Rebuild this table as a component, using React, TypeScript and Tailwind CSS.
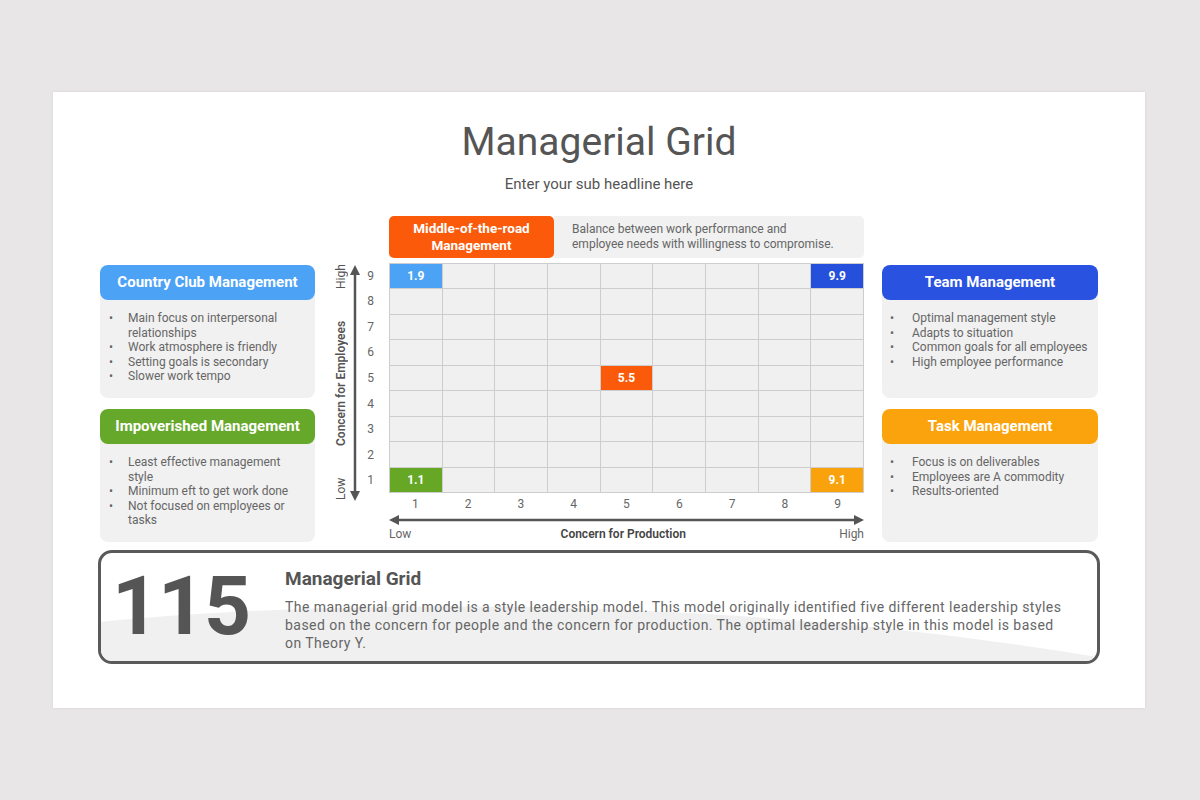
import React from 'react';

interface StyleCard {
  title: string;
  color: string;
  items: string[];
}

const leftCards: StyleCard[] = [
  {
    title: 'Country Club Management',
    color: 'bg-[#4ca2f5]',
    items: [
      'Main focus on interpersonal relationships',
      'Work atmosphere is friendly',
      'Setting goals is secondary',
      'Slower work tempo',
    ],
  },
  {
    title: 'Impoverished Management',
    color: 'bg-[#66a82a]',
    items: [
      'Least effective management style',
      'Minimum eft to get work done',
      'Not focused on employees or tasks',
    ],
  },
];

const rightCards: StyleCard[] = [
  {
    title: 'Team Management',
    color: 'bg-[#2952e0]',
    items: [
      'Optimal management style',
      'Adapts to situation',
      'Common goals for all employees',
      'High employee performance',
    ],
  },
  {
    title: 'Task Management',
    color: 'bg-[#fba30d]',
    items: ['Focus is on deliverables', 'Employees are A commodity', 'Results-oriented'],
  },
];

// row 1 = top (value 9), col 1 = left (value 1)
const marks: Record<string, { label: string; color: string }> = {
  '1-1': { label: '1.9', color: 'bg-[#4ca2f5]' },
  '1-9': { label: '9.9', color: 'bg-[#2450dc]' },
  '5-5': { label: '5.5', color: 'bg-[#fa5a0a]' },
  '9-1': { label: '1.1', color: 'bg-[#66a826]' },
  '9-9': { label: '9.1', color: 'bg-[#f9a20c]' },
};

const Card = ({ card, right }: { card: StyleCard; right?: boolean }) => (
  <div className="flex flex-col">
    <div
      className={`${card.color} relative z-10 h-[35px] rounded-[8px] flex items-center justify-center text-white text-[15px] font-bold`}
    >
      {card.title}
    </div>
    <div className="bg-[#f1f1f1] rounded-b-[8px] -mt-[6px] pt-[17px] pb-2 h-[104px]">
      <ul className={right ? 'pl-[8px] pr-1' : 'pl-[9px] pr-3'}>
        {card.items.map((item) => (
          <li key={item} className="flex text-[12px] leading-[14.5px] text-[#666]">
            <span className={right ? 'w-[22px] shrink-0' : 'w-[19px] shrink-0'}>•</span>
            <span>{item}</span>
          </li>
        ))}
      </ul>
    </div>
  </div>
);

const ManagerialGrid = () => {
  const rows = [1, 2, 3, 4, 5, 6, 7, 8, 9];
  return (
    <div className="w-[549px] flex flex-col">
      {/* Middle-of-the-road banner */}
      <div className="ml-[74px] w-[475px] h-[42px] flex">
        <div className="w-[165px] bg-[#fa5a0a] rounded-[5px] flex items-center justify-center text-center text-white text-[13.5px] font-bold leading-[17px]">
          Middle-of-the-road
          <br />
          Management
        </div>
        <div className="flex-1 bg-[#f1f1f1] rounded-r-[5px] flex items-center pl-[18px] text-[12px] leading-[15px] text-[#666]">
          Balance between work performance and
          <br />
          employee needs with willingness to compromise.
        </div>
      </div>

      {/* Y axis + grid */}
      <div className="mt-[5px] flex h-[230px]">
        <div className="w-[74px] flex justify-end pr-[9px]">
          <div className="h-[236px] mt-[1px] w-[14px] flex justify-between items-center [writing-mode:vertical-rl] rotate-180 text-[12px] text-[#555]">
            <span>Low</span>
            <span className="font-semibold">Concern for Employees</span>
            <span>High</span>
          </div>
          <svg className="ml-[1px] w-[12px] h-[236px] mt-[2px] shrink-0" viewBox="0 0 12 236">
            <line x1="6" y1="8" x2="6" y2="228" stroke="#555" strokeWidth="2.5" />
            <polygon points="6,0 11,10 1,10" fill="#555" />
            <polygon points="6,236 11,226 1,226" fill="#555" />
          </svg>
          <div className="w-[19px] grid grid-rows-9 text-[12px] text-[#666] text-center">
            {rows.map((r) => (
              <div key={r} className="flex items-center justify-center">
                {10 - r}
              </div>
            ))}
          </div>
        </div>
        <div className="w-[475px] h-[230px] grid grid-cols-9 grid-rows-9 bg-[#cdcdcd] gap-px border border-[#cdcdcd]">
          {rows.map((r) =>
            rows.map((c) => {
              const m = marks[`${r}-${c}`];
              return m ? (
                <div
                  key={`${r}-${c}`}
                  className={`${m.color} flex items-center justify-center text-white text-[12px] font-bold`}
                >
                  {m.label}
                </div>
              ) : (
                <div key={`${r}-${c}`} className="bg-[#f0f0f0]" />
              );
            })
          )}
        </div>
      </div>

      {/* X axis */}
      <div className="ml-[74px] w-[475px] h-[22px] grid grid-cols-9 text-[12px] text-[#666]">
        {rows.map((c) => (
          <div key={c} className="flex items-center justify-center">
            {c}
          </div>
        ))}
      </div>
      <svg className="ml-[74px] w-[475px] h-[10px]" viewBox="0 0 475 10">
        <line x1="8" y1="5" x2="467" y2="5" stroke="#555" strokeWidth="2.5" />
        <polygon points="0,5 10,0 10,10" fill="#555" />
        <polygon points="475,5 465,0 465,10" fill="#555" />
      </svg>
      <div className="ml-[74px] w-[475px] mt-[2px] h-[14px] flex justify-between items-center text-[12px] leading-[14px] text-[#666]">
        <span>Low</span>
        <span className="font-semibold text-[#444] mr-[4px]">Concern for Production</span>
        <span>High</span>
      </div>
    </div>
  );
};

const App: React.FC = () => {
  return (
    <div className="w-[1200px] h-[800px] bg-[#e8e6e7] pt-[92px] pl-[53px] font-['Roboto',sans-serif]">
      <div className="w-[1092px] h-[616px] bg-white shadow-[0_0_3px_rgba(0,0,0,0.08)] pt-[27px] flex flex-col">
        <h1 className="text-center text-[39px] leading-[46px] text-[#555]">Managerial Grid</h1>
        <p className="mt-[9px] text-center text-[15px] leading-[20px] text-[#555]">
          Enter your sub headline here
        </p>

        <div className="mt-[22px] pl-[47px] flex items-start">
          <div className="w-[215px] mt-[49px] flex flex-col gap-[11px]">
            {leftCards.map((card) => (
              <Card key={card.title} card={card} />
            ))}
          </div>
          <ManagerialGrid />
          <div className="w-[216px] ml-[18px] mt-[49px] flex flex-col gap-[11px]">
            {rightCards.map((card) => (
              <Card key={card.title} card={card} right />
            ))}
          </div>
        </div>

        {/* Summary box */}
        <div className="relative mt-[8px] ml-[45px] w-[1002px] h-[114px] border-[3px] border-[#5a5a5a] rounded-[14px] overflow-hidden flex items-start">
          <svg
            className="absolute inset-0 w-full h-full"
            viewBox="0 0 1000 110"
            preserveAspectRatio="none"
          >
            <path d="M0,70 C240,46 640,44 1000,106 L1000,110 L0,110 Z" fill="#f0f0f0" />
          </svg>
          <div className="relative shrink-0 w-[184px] pl-[11px] pt-[12px] text-[82px] leading-[82px] font-bold text-[#555] tracking-[-1px]">
            115
          </div>
          <div className="relative pt-[14px] pr-[26px]">
            <h2 className="text-[19px] leading-[24px] font-bold text-[#555]">Managerial Grid</h2>
            <p className="mt-[7px] text-[14px] leading-[18px] text-[#666] tracking-[0.45px]">
              The managerial grid model is a style leadership model. This model originally identified five
              different leadership styles based on the concern for people and the concern for production. The
              optimal leadership style in this model is based on Theory Y.
            </p>
          </div>
        </div>
      </div>
    </div>
  );
};

export default App;
